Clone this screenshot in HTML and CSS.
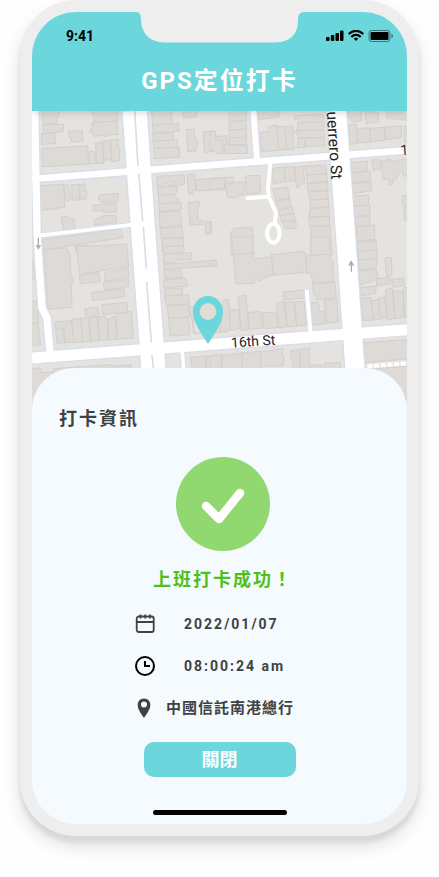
FILE: index.html
```html
<!DOCTYPE html>
<html lang="zh-Hant">
<head>
	<title>GPS定位打卡</title>
	<meta charset="utf-8">
	<meta name="viewport" content="width=device-width, initial-scale=1">
	<link rel="stylesheet" href="styles.css">
</head>
<body>

	<div class="phone">
		<svg class="notch" viewBox="0 0 168 31" aria-hidden="true">
			<path d="M0 0C4 0 5 3 5 7V9C6 22 14 30 28 30.500H140C154 30 162 22 162 9V7C162 3 164 0 168 0Z"/>
		</svg>
		<div class="screen">
			<header class="header">
				<div class="status">
					<span>9:41</span>
					<svg width="67" height="13" viewBox="0 0 67 13" aria-hidden="true">
						<rect x="0" y="7" width="3.500" height="4" rx="1"/>
						<rect x="4.800" y="5" width="3.500" height="6" rx="1"/>
						<rect x="9.500" y="3" width="3.500" height="8" rx="1"/>
						<rect x="14" y=".5" width="3.500" height="10.500" rx="1"/>
						<g fill="none" stroke="#000" stroke-width="2.200">
							<path d="M22.700 4C27 -.2 33 -.2 37.300 4"/>
							<path d="M25.300 7C28 4.200 32 4.200 34.700 7"/>
						</g>
						<path d="M27.700 8.600C29 7.400 31 7.400 32.300 8.600L30 11Z"/>
						<rect x="43" y=".5" width="21" height="11" rx="2.500" fill="none" stroke="#000" stroke-opacity=".45"/>
						<rect x="44.500" y="2" width="18" height="8" rx="1"/>
						<path d="M65.500 4C67.500 4.500 67.500 7 65.500 8Z" opacity=".5"/>
					</svg>
				</div>
				<h1>GPS定位打卡</h1>
			</header>

			<svg class="map" viewBox="0 0 1125 900" preserveAspectRatio="xMidYMin slice" role="img" aria-label="地圖">
				<!-- buildings, one group per quarter of the map -->
				<g class="buildings">
					<g transform="translate(-36 -18)">
						<path d="M66 10H116V38H110V55L70 60Z"/>
						<path d="M70 60L130 58V80L70 86Z"/>
						<path d="M65 86L106 84V116L64 118Z"/>
						<path d="M146 79L186 76L189 108L155 112L153 96L146 97Z"/>
						<path d="M214 10H292V48L222 52L220 36Z"/>
						<path d="M215 54L292 48L294 88L262 90V94H252V90L220 94V82H210V72H217Z"/>
						<path d="M66 130L203 123L206 177L68 185Z"/>
						<path d="M206 140L222 139L230 175L206 176Z"/>
						<path d="M227 114L246 111L252 174L230 176Z"/>
						<path d="M246 108L272 107L275 164L252 166Z"/>
						<path d="M272 106L295 103V124L299 130V166L276 170Z"/>
						<path d="M56 242L131 238L135 306L60 317Z"/>
						<path d="M132 242L145 239L154 284L142 288L136 280Z"/>
						<path d="M155 239L177 238L180 284L157 286Z"/>
						<path d="M178 239L196 236V250L200 264L198 283L181 284Z"/>
						<path d="M239 270L294 265L295 288L245 292L243 285H236V274Z"/>
						<path d="M220 300L290 294V321L250 322V317L220 318Z"/>
						<path d="M222 345L252 332L289 331V352L224 360Z"/>
						<path d="M124 336L142 333L146 341L161 340L164 371L131 380Z"/>
						<path d="M68 404L300 372L310 398L68 435Z"/>
						<path d="M166 424L200 420V434L320 418V440H166Z"/>
						<path d="M394 10H455V58L398 60Z"/>
						<path d="M397 60L475 55L477 78L400 84Z"/>
						<path d="M398 85L460 83V106L400 110Z"/>
						<path d="M400 109L472 104V127L402 131Z"/>
						<path d="M402 130L478 127L479 156L403 161Z"/>
						<path d="M488 10H530V36L490 38Z"/>
						<path d="M499 73H522L524 98L532 102V121L528 138L503 140Z"/>
						<path d="M549 80L585 78L587 138L554 142Z"/>
						<path d="M586 95L620 92V142L596 145Z"/>
						<path d="M410 214L492 210L494 238L466 242V230H457V242L442 240V234H432V243L412 245Z"/>
						<path d="M412 246L470 244L471 262L463 269L415 271Z"/>
						<path d="M415 271L464 268L475 282V292L417 297Z"/>
						<path d="M417 297L484 292V314L418 320Z"/>
						<path d="M418 322L480 318L484 340V360L420 368Z"/>
						<path d="M422 370L486 364L490 396L424 402Z"/>
						<path d="M426 403L490 399V440H426Z"/>
						<path d="M502 209L524 207L527 256H518V266L506 268Z"/>
						<path d="M526 224L640 216V252L530 258Z"/>
						<path d="M505 292L538 289L540 303L532 305L534 345L548 348V358L510 360Z"/>
						<path d="M555 350H574V386L557 388Z"/>
					</g>
					<g transform="translate(534 -18)">
						<path d="M56 10H108V46L58 50Z"/>
						<path d="M57 50L109 46V72L57 76Z"/>
						<path d="M57 76L109 73V98L57 98Z"/>
						<path d="M57 98L110 97V120L55 118Z"/>
						<path d="M42 120L112 122V145L46 146Z"/>
						<path d="M0 80L15 78L18 104L36 106L40 145L20 146L10 135L0 138Z"/>
						<path d="M144 10H206V36L146 45Z"/>
						<path d="M152 82L176 80V64L200 60L207 136L154 140Z"/>
						<path d="M200 66L224 63L230 132L206 136Z"/>
						<path d="M225 66L248 63L252 132L230 134Z"/>
						<path d="M253 32L340 28V52L264 54V44H253Z"/>
						<path d="M264 54L342 50V74L260 78Z"/>
						<path d="M252 78L342 74V98H264L260 86Z"/>
						<path d="M264 100L344 98V122L286 126V104L282 128H262Z"/>
						<path d="M412 10H454V48L430 50L414 36Z"/>
						<path d="M466 20L504 22L506 52L468 56Z"/>
						<path d="M530 10H600V36L590 46L560 42L530 38Z"/>
						<path d="M414 58H440L443 114L420 118Z"/>
						<path d="M443 72L480 68V112L444 114Z"/>
						<path d="M480 70L524 67L526 105L482 110Z"/>
						<path d="M525 66L574 62V98L526 104Z"/>
						<path d="M583 64H600V110L583 112Z"/>
						<path d="M188 190L222 186L226 228L190 238Z"/>
						<path d="M223 187L252 185L258 228L226 230Z"/>
						<path d="M254 187L280 184L284 236L268 238V247H260Z"/>
						<path d="M284 184L347 180L350 206L290 210Z"/>
						<path d="M290 210L350 207L352 230L292 236Z"/>
						<path d="M292 236L353 232L354 256L294 260Z"/>
						<path d="M296 260L354 257V282L299 285Z"/>
						<path d="M300 285L356 282V306L302 310Z"/>
						<path d="M300 312L357 306V334L298 336Z"/>
						<path d="M296 338L358 334L360 362L298 364Z"/>
						<path d="M302 366L360 363L366 450H302Z"/>
						<path d="M188 252L232 246L240 280L198 286Z"/>
						<path d="M196 288L240 282L244 308L208 314Z"/>
						<path d="M206 315L246 306L250 326L210 332Z"/>
						<path d="M210 332L252 326L256 346L216 350Z"/>
						<path d="M216 350L258 348V370L226 372Z"/>
						<path d="M0 222L44 218V250L0 254Z"/>
						<path d="M46 236L102 230V270H84V278H52Z"/>
						<path d="M106 216L112 211L150 212L152 264L110 268Z"/>
						<path d="M62 384L70 370L126 366L132 450H64Z"/>
						<path d="M420 174L472 168V198L424 204Z"/>
						<path d="M424 205L480 198V228L426 234Z"/>
						<path d="M426 236L484 232V258L428 266Z"/>
						<path d="M430 274L476 270V300L432 304Z"/>
						<path d="M432 304L480 300V330L434 334Z"/>
						<path d="M436 336L480 334V362L438 364Z"/>
						<path d="M440 366L494 360V404L442 408Z"/>
						<path d="M442 408L498 404V440H442Z"/>
						<path d="M486 166L510 164L514 192L490 196Z"/>
						<path d="M515 168L532 166V160L556 170L574 162L600 164V210L582 214L574 196L556 224L548 222V238H538V224L518 222Z"/>
						<path d="M578 272H600V345H582V300H576Z"/>
						<path d="M0 350H5V386H0Z"/>
					</g>
					<g transform="translate(-36 387)">
						<path d="M72 28L140 24L150 42L153 110L160 118V128L154 132L156 202L84 208Z"/>
						<path d="M170 20L320 12L326 78L178 104Z"/>
						<path d="M178 108L236 96L240 124L182 132Z"/>
						<path d="M254 98L324 84L326 112L254 124Z"/>
						<path d="M250 128L326 118V140L254 150Z"/>
						<path d="M214 158L312 146L314 170L218 182Z"/>
						<path d="M246 194L322 187V216L248 224Z"/>
						<path d="M195 206L234 202L238 224L212 228V232H197Z"/>
						<path d="M104 246L152 242V252L138 264H106Z"/>
						<path d="M106 268L130 266L134 308L112 311Z"/>
						<path d="M132 266L154 240L162 306L136 309Z"/>
						<path d="M155 238L182 235L188 305L162 308Z"/>
						<path d="M182 235L206 233L212 303L188 306Z"/>
						<path d="M207 233L232 230L238 302L213 304Z"/>
						<path d="M233 231L256 228V238H262V300H239Z"/>
						<path d="M263 240L284 228L290 298L266 300Z"/>
						<path d="M288 224L334 214L340 294L292 298Z"/>
						<path d="M30 64H42L46 114L36 118Z"/>
						<path d="M30 180L50 184L56 248L30 252Z"/>
						<path d="M30 254L54 248L62 314L30 317Z"/>
						<path d="M30 386L60 384L64 398L104 396V430L30 470Z"/>
						<path d="M100 386L276 374V400H100Z"/>
						<path d="M280 378L334 375V395H280Z"/>
						<path d="M428 -5H490V18L428 20Z"/>
						<path d="M430 20L492 18V38L430 42Z"/>
						<path d="M430 42L514 38L516 60H478L470 58L464 70L430 70Z"/>
						<path d="M430 74L588 60L590 78L432 88Z"/>
						<path d="M432 92L484 90L487 112L434 116Z"/>
						<path d="M430 120L498 115L502 138L432 144Z"/>
						<path d="M434 148L486 144L488 164L434 168Z"/>
						<path d="M434 168L506 164L508 192L438 196Z"/>
						<path d="M442 198L506 193L508 230L446 236Z"/>
						<path d="M446 236L506 231L510 284L450 288Z"/>
						<path d="M506 200H520V280L590 278V218H620V276L524 281Z"/>
						<path d="M512 352L556 348L560 400H528V380H514Z"/>
						<path d="M558 348H582V400H560Z"/>
						<path d="M584 348H620V400H584Z"/>
					</g>
					<g transform="translate(534 387)">
						<path d="M64 -10H130V38L70 44Z"/>
						<path d="M70 44L128 40L132 58L184 50L190 104L156 116L150 123L136 118L132 130L78 132Z"/>
						<path d="M184 44L276 34L288 40L290 96L190 106Z"/>
						<path d="M302 -10H358V30L366 36V46H302Z"/>
						<path d="M288 48L358 42L364 58L370 64V84L366 94L372 104V124L308 130L304 100H290Z"/>
						<path d="M308 132L376 127L378 174L320 178L310 160Z"/>
						<path d="M220 156L284 150L286 174L222 180Z"/>
						<path d="M40 180L56 178L60 270L30 274Z"/>
						<path d="M60 210L84 208L92 264L60 272Z"/>
						<path d="M84 168L108 166L116 268L94 272Z"/>
						<path d="M114 218L152 214L158 264L118 268Z"/>
						<path d="M158 218L200 216L204 262L160 266Z"/>
						<path d="M200 190L222 184L232 260L208 264Z"/>
						<path d="M224 188L252 185L260 258L232 260Z"/>
						<path d="M254 186L282 184L290 254L260 258Z"/>
						<path d="M302 190L324 186L330 216L344 212L348 250L308 256Z"/>
						<path d="M342 180L380 176L386 246L350 250Z"/>
						<path d="M0 62H20V78L0 80Z"/>
						<path d="M0 346L34 344V390H0Z"/>
						<path d="M36 346L96 340V390H36Z"/>
						<path d="M96 338L152 334V390H96Z"/>
						<path d="M152 336L218 326V350L224 356L220 378H152Z"/>
						<path d="M242 332L268 328V390H248V362L242 356Z"/>
						<path d="M270 328L298 324V390H270Z"/>
						<path d="M302 376L334 374V395H302Z"/>
						<path d="M342 370L392 368V390H342Z"/>
						<path d="M440 8L498 5L500 30L442 34Z"/>
						<path d="M444 34L502 31V56L446 60Z"/>
						<path d="M446 60L502 56L498 84L450 90Z"/>
						<path d="M446 92L500 88L504 116L450 136Z"/>
						<path d="M500 116L540 112L542 132L500 136Z"/>
						<path d="M524 54L544 52L546 106L530 110Z"/>
						<path d="M546 118L580 114L584 136L550 142Z"/>
						<path d="M450 142L500 138L496 160L454 168Z"/>
						<path d="M454 174L484 172L490 240L458 242Z"/>
						<path d="M486 182L506 180L512 236L490 240Z"/>
						<path d="M504 176L524 172L532 232L512 236Z"/>
						<path d="M526 150L548 144L554 236L532 238Z"/>
						<path d="M550 154L578 152L582 232L554 236Z"/>
						<path d="M580 144L600 140V230L584 232Z"/>
						<path d="M462 308L600 298V356L464 368Z"/>
						<path d="M480 388L600 378V480H560Z"/>
					</g>
				</g>

				<g class="road-edges">
					<path d="M8 0L15 363L21 462L30 591L45 621L54 723" stroke-width="30"/>
					<path d="M308 0L335 381L358 687L366 800" stroke-width="80"/>
					<path d="M0 204L564 160L1125 118" stroke-width="28"/>
					<path d="M0 741L564 698L1125 656" stroke-width="41"/>
					<path d="M24 374L310 340" stroke-width="18"/>
					<path d="M914 0L942 390L970 790" stroke-width="65"/>
					<path d="M664 0L675 141" stroke-width="25"/>
					<path d="M450 720L456 790" stroke-width="18"/>
					<path d="M824 537L837 670" stroke-width="18"/>
				</g>
				<g class="roads">
					<path d="M8 0L15 363L21 462L30 591L45 621L54 723" stroke-width="22"/>
					<path d="M308 0L335 381L358 687L366 800" stroke-width="72"/>
					<path d="M0 204L564 160L1125 118" stroke-width="20"/>
					<path d="M0 741L564 698L1125 656" stroke-width="33"/>
					<path d="M20 374L310 340" stroke-width="11"/>
					<path d="M914 0L942 390L970 790" stroke-width="57"/>
					<path d="M664 0L675 150" stroke-width="18"/>
					<path d="M450 710L456 790" stroke-width="11"/>
					<path d="M824 537L837 680" stroke-width="12"/>
				</g>
				<g class="lanes">
					<path d="M715 156L708 231L712 261L732 306L728 335M646 262L710 257"/>
					<ellipse cx="724" cy="367" rx="19" ry="28"/>
				</g>
				<path class="crossing" d="M1006 766L1125 757"/>
				<path class="divider" d="M308 0L318 165M320 187L332 330M334 348L343 473M344 512L358 695M360 732L366 790"/>
				<g class="arrows">
					<path d="M19 380V408M13 402L19 412L25 402"/>
					<path d="M958 482V455M951 464L957 452L965 464"/>
				</g>

				<g class="street-names">
					<text class="avenue" transform="translate(884 2) rotate(86)">uerrero St</text>
					<text transform="translate(598 710) rotate(-4)">16th St</text>
					<text transform="translate(1106 132) rotate(-4)">1</text>
				</g>

				<circle cx="528" cy="602" r="26" fill="#e0ddd8"/>
				<path class="pin" fill-rule="evenodd" d="M528 555C503 555 483 575 483 602C483 636 511 670 528 699C545 670 573 636 573 602C573 575 553 555 528 555ZM528 577A25 25 0 1 1 528 627A25 25 0 1 1 528 577Z"/>
			</svg>

			<main class="sheet">
				<div class="info">
					<h2>打卡資訊</h2>
					<svg class="check" viewBox="0 0 94 94" aria-hidden="true">
						<circle cx="47" cy="47" r="47" fill="#90d86f"/>
						<path d="M30 49L43 62L64 36" fill="none" stroke="#fff" stroke-width="8.500" stroke-linecap="round" stroke-linejoin="round"/>
					</svg>
					<p class="success">上班打卡成功！</p>
					<ul class="details">
						<li>
							<svg width="20" height="20" viewBox="0 0 20 20" fill="none" stroke="#3f4242" aria-hidden="true">
								<rect x="1.700" y="2.500" width="17" height="15.500" rx="2" stroke-width="1.800"/>
								<path d="M2 8H18.500M5.500 .5V4.500M10.200 .5V4.500M15 .5V4.500" stroke-width="1.800"/>
							</svg>
							<time>2022/01/07</time>
						</li>
						<li>
							<svg width="20" height="20" viewBox="0 0 20 20" fill="none" stroke="#000" stroke-width="2" aria-hidden="true">
								<circle cx="10" cy="10" r="9"/>
								<path d="M10 5V10H15"/>
							</svg>
							<time>08:00:24 am</time>
						</li>
						<li>
							<svg width="20" height="20" viewBox="0 0 20 20" fill="#3f4242" aria-hidden="true">
								<path fill-rule="evenodd" d="M9 .5C5.300 .5 2.700 3.300 2.700 6.900C2.700 11.500 6.500 16 9 20C11.500 16 15.300 11.500 15.300 6.900C15.300 3.300 12.700 .5 9 .5ZM9 3.500A3 3 0 1 1 9 9.500A3 3 0 1 1 9 3.500Z"/>
							</svg>
							<span>中國信託南港總行</span>
						</li>
					</ul>
				</div>
				<button type="button">關閉</button>
				<div class="home-bar"></div>
			</main>
		</div>
	</div>

</body>
</html>
```

FILE: styles.css
```css
* {
	box-sizing: border-box;
}
body {
	margin: 0;
	padding: 0 20px 40px;
	background-color: #fefefe;
	font-family: Roboto, "Noto Sans CJK TC", sans-serif;
	color: #3f4242;
}
h1, h2, p, ul {
	margin: 0;
	padding: 0;
}

.phone {
	position: relative;
	padding: 12px;
	background-color: #eee;
	border-radius: 56px;
	box-shadow: 0 6px 4px 0 #d8d8d8, 0 10px 18px 0 rgba(0,0,0,0.12);
}
.notch {
	position: absolute;
	top: 12px;
	left: 50%;
	width: 168px;
	height: 31px;
	transform: translateX(-50%);
	fill: #eee;
	z-index: 2;
}
.screen {
	overflow: hidden;
	border-radius: 44px;
	background-color: #f5faff;
}

.header {
	position: relative;
	height: 99px;
	background-color: #6bd7dc;
	box-shadow: 0 3px 6px 0 rgba(0,0,0,0.12);
	color: #fff;
	text-align: center;
}
.status {
	display: flex;
	justify-content: space-between;
	align-items: center;
	height: 48px;
	padding: 0 14px 0 34px;
	color: #000;
	font-size: 14px;
	font-weight: bold;
}
h1 {
	font-size: 24px;
	line-height: 42px;
	font-weight: bold;
	letter-spacing: 2px;
}

.map {
	display: block;
	width: 100%;
	height: 300px;
	background-color: #e4e3df;
}
.buildings {
	fill: #dedad7;
	stroke: #d3d0cc;
	stroke-width: 3;
}
.road-edges, .roads, .lanes {
	fill: none;
	stroke: #d9dde8;
	stroke-linejoin: round;
}
.roads, .lanes {
	stroke: #fff;
}
.lanes {
	stroke-width: 12;
	stroke-linecap: round;
}
.crossing {
	stroke: #fff;
	stroke-width: 12;
	stroke-dasharray: 16 4;
}
.divider {
	fill: none;
	stroke: #d9dde8;
	stroke-width: 5;
}
.arrows {
	fill: none;
	stroke: #aaa;
	stroke-width: 4;
}
.street-names {
	font-size: 42px;
	fill: #222;
}
.street-names .avenue {
	font-size: 47px;
}
.pin {
	fill: #6bd7dc;
}

.sheet {
	position: relative;
	display: flex;
	flex-direction: column;
	align-items: center;
	margin-top: -43px;
	padding-bottom: 9px;
	border-radius: 42px 42px 0 0;
	background-color: #f5faff;
}
.info {
	display: flex;
	flex-direction: column;
	align-items: center;
	width: 100%;
	padding: 39px 20px 0 27px;
}
h2 {
	align-self: flex-start;
	font-size: 18px;
	line-height: 24px;
	letter-spacing: 2px;
}
.check {
	width: 94px;
	height: 94px;
	margin-top: 26px;
}
.success {
	margin-top: 17px;
	color: #4fc01a;
	font-size: 18px;
	font-weight: bold;
	line-height: 24px;
	letter-spacing: 2px;
}
.details {
	width: 176px;
	margin-top: 11px;
	list-style: none;
	font-size: 15px;
	font-weight: bold;
	letter-spacing: 1px;
}
.details li {
	display: flex;
	align-items: center;
	gap: 11px;
	height: 42px;
	line-height: 20px;
	white-space: nowrap;
}
.details time {
	padding-left: 18px;
	font-size: 14px;
	letter-spacing: 2px;
}
button {
	width: 152px;
	height: 35px;
	margin-top: 13px;
	padding: 0;
	border: none;
	border-radius: 10px;
	background-color: #6bd7dc;
	color: #fff;
	font-family: inherit;
	font-size: 18px;
	font-weight: bold;
	line-height: 32px;
}
.home-bar {
	width: 134px;
	height: 5px;
	margin-top: 33px;
	border-radius: 5px;
	background-color: #000;
}
```
